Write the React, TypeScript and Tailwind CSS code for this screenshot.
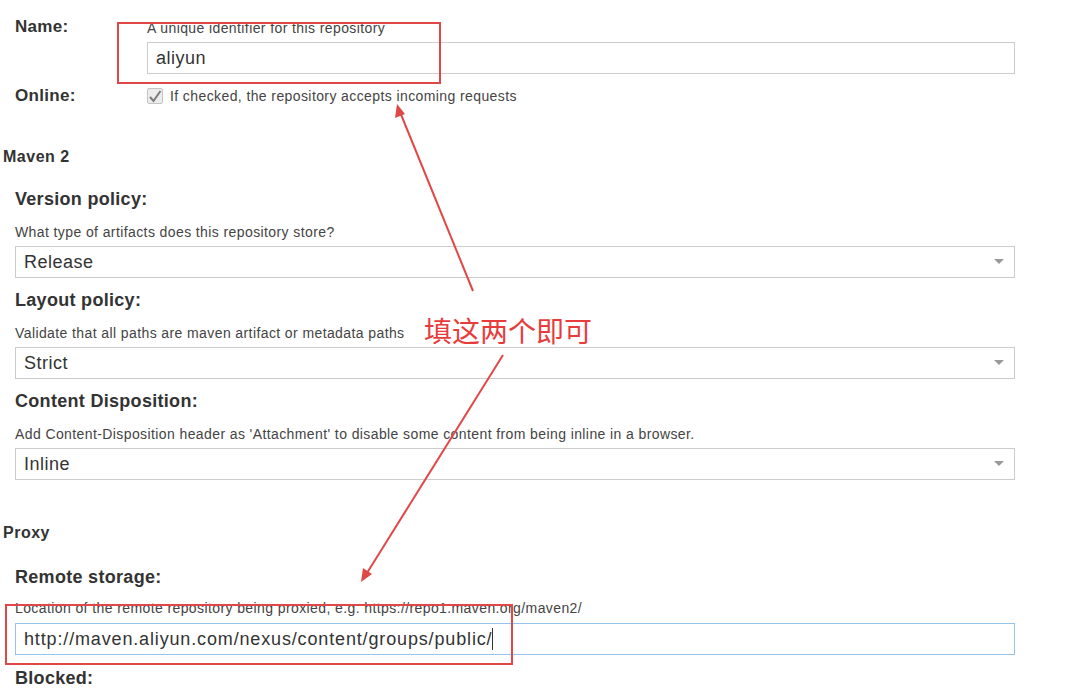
import React from "react";

const font = { fontFamily: '"Liberation Sans", Arial, sans-serif' };

function SelectBox({ value }: { value: string }) {
    return (
        <div className="flex items-center justify-between h-[32px] w-[1000px] border border-[#cccccc] bg-white pl-[8px] pr-[10px]">
            <span className="text-[18px] tracking-[0.5px] text-[#333333]">{value}</span>
            <svg width="10" height="6" viewBox="0 0 10 6">
                <polygon points="0,0 10,0 5,5" fill="#9a9a9a" />
            </svg>
        </div>
    );
}

function Field({ label, help, value }: { label: string; help: string; value: string }) {
    return (
        <div className="pl-[15px] pt-[11px]">
            <div className="text-[18px] font-bold leading-[22px] tracking-[0.3px] text-[#333333]">{label}</div>
            <div className="mt-[14px] text-[14px] leading-[16px] tracking-[0.4px] text-[#444444]">{help}</div>
            <div className="mt-[6px]">
                <SelectBox value={value} />
            </div>
        </div>
    );
}

export default function App() {
    return (
        <div className="relative w-[1066px] h-[698px] overflow-hidden bg-white" style={font}>
            {/* Name */}
            <div className="flex pl-[15px] pt-[19px]">
                <div className="w-[132px] text-[17px] font-bold leading-[16px] tracking-[0.3px] text-[#333333]">Name:</div>
                <div>
                    <div className="mt-[1px] text-[14px] leading-[16px] tracking-[0.4px] text-[#444444]">A unique identifier for this repository</div>
                    <div className="mt-[6px] flex items-center h-[32px] w-[868px] border border-[#cccccc] pl-[8px]">
                        <span className="text-[18px] tracking-[0.5px] text-[#333333]">aliyun</span>
                    </div>
                </div>
            </div>

            {/* Online */}
            <div className="flex items-center pl-[15px] mt-[13px] h-[18px]">
                <div className="w-[132px] text-[17px] font-bold tracking-[0.3px] text-[#333333]">Online:</div>
                <div className="flex items-center gap-[7px]">
                    <div className="flex items-center justify-center w-[16px] h-[16px] rounded-[2px] border border-[#c4c4c4] bg-[#ececec]">
                        <svg width="14" height="13" viewBox="0 0 14 13">
                            <path d="M2 7 L5.5 11 L12.5 1" stroke="#7a7a7a" strokeWidth="2" fill="none" />
                        </svg>
                    </div>
                    <span className="text-[14px] tracking-[0.4px] text-[#444444]">If checked, the repository accepts incoming requests</span>
                </div>
            </div>

            {/* Maven 2 */}
            <div className="pl-[3px] mt-[43px] text-[16px] font-bold leading-[18px] tracking-[0.5px] text-[#333333]">Maven 2</div>

            <div className="mt-[11px]">
                <Field label="Version policy:" help="What type of artifacts does this repository store?" value="Release" />
                <Field label="Layout policy:" help="Validate that all paths are maven artifact or metadata paths" value="Strict" />
                <Field label="Content Disposition:" help="Add Content-Disposition header as 'Attachment' to disable some content from being inline in a browser." value="Inline" />
            </div>

            {/* Proxy */}
            <div className="pl-[3px] mt-[44px] text-[16px] font-bold leading-[18px] tracking-[0.5px] text-[#333333]">Proxy</div>

            <div className="pl-[15px] mt-[24px]">
                <div className="text-[18px] font-bold leading-[22px] tracking-[0.3px] text-[#333333]">Remote storage:</div>
                <div className="mt-[12px] text-[14px] leading-[16px] tracking-[0.4px] text-[#444444]">Location of the remote repository being proxied, e.g. https://repo1.maven.org/maven2/</div>
                <div className="mt-[7px] flex items-center h-[32px] w-[1000px] border border-[#98c4ea] pl-[8px]">
                    <span className="text-[18px] tracking-[0.85px] text-[#333333]">http://maven.aliyun.com/nexus/content/groups/public/</span>
                    <span className="w-[1px] h-[22px] bg-[#333333]" />
                </div>
                <div className="mt-[12px] text-[18px] font-bold leading-[22px] tracking-[0.3px] text-[#333333]">Blocked:</div>
            </div>

            {/* annotations */}
            <div className="absolute left-[117px] top-[22px] w-[324px] h-[62px] border-2 border-[#e04848]" />
            <div className="absolute left-[5px] top-[604px] w-[508px] h-[61px] border-2 border-[#e04848]" />
            <div
                className="absolute left-[424px] top-[312px] text-[28px] leading-[36px] text-[#e83c3c]"
                style={{ fontFamily: '"Noto Sans CJK SC", sans-serif' }}
            >
                填这两个即可
            </div>
            <svg className="absolute left-0 top-0" width="1066" height="698">
                <line x1="473" y1="291" x2="400" y2="112" stroke="#e04848" strokeWidth="2" />
                <polygon points="397,104 395,118 405,114" fill="#e04848" />
                <line x1="503" y1="355" x2="367" y2="573" stroke="#e04848" strokeWidth="2" />
                <polygon points="361,582 363,568 372,574" fill="#e04848" />
            </svg>
        </div>
    );
}
